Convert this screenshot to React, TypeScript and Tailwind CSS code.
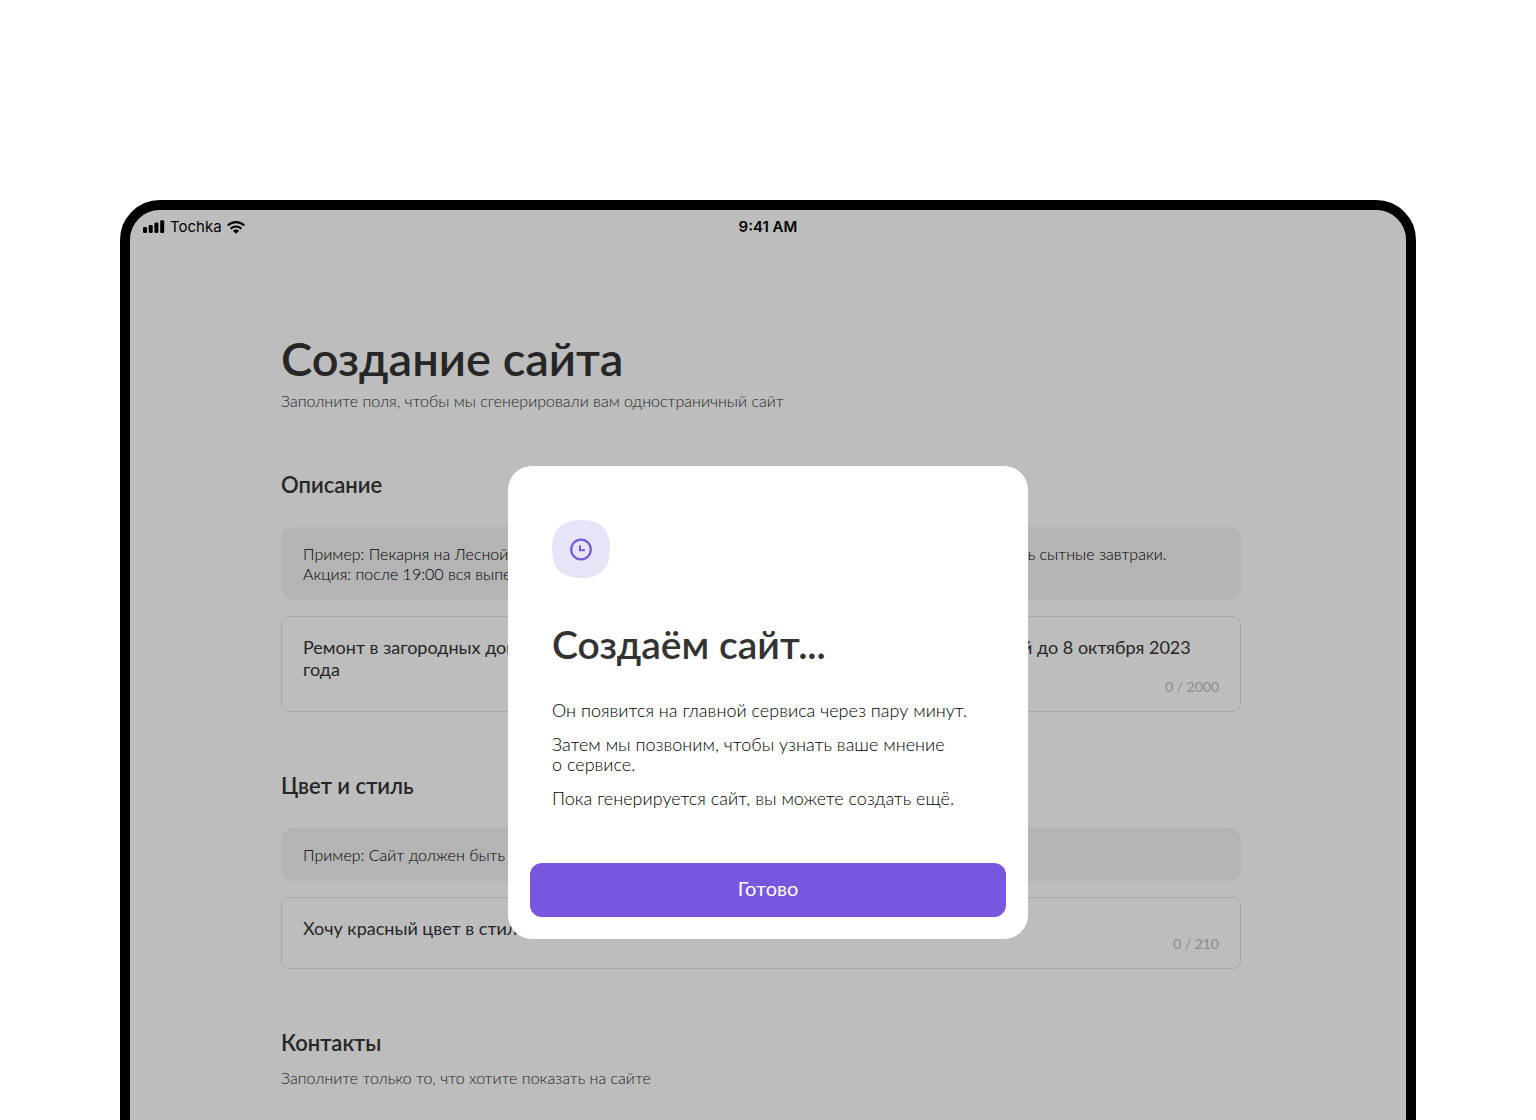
import type { ReactNode } from "react";

function Signal() {
  return (
    <svg width="22" height="14" viewBox="0 0 22 14" fill="currentColor" aria-hidden="true">
      <rect x="0" y="7" width="4" height="6" rx="1.2" />
      <rect x="5.7" y="5" width="4" height="8" rx="1.2" />
      <rect x="11.4" y="2.6" width="4" height="10.4" rx="1.2" />
      <rect x="17.2" y="0.2" width="4" height="12.8" rx="1.2" />
    </svg>
  );
}

function Wifi() {
  return (
    <svg width="18" height="13" viewBox="0 0 18 13" fill="none" stroke="currentColor" strokeWidth="2.1" aria-hidden="true">
      <path d="M0.8 4.6C5.4 0 12.6 0 17.2 4.6" />
      <path d="M3.7 7.7C6.7 4.8 11.3 4.8 14.3 7.7" />
      <path d="M9 12.8L5.9 9.8C7.7 8.2 10.3 8.2 12.1 9.8Z" fill="currentColor" stroke="none" />
    </svg>
  );
}

function ClockBadge() {
  return (
    <svg width="58" height="58" viewBox="0 0 58 58" fill="none" aria-hidden="true">
      <path d="M0 29C0 9.5 9.5 0 29 0C48.5 0 58 9.5 58 29C58 48.5 48.5 58 29 58C9.5 58 0 48.5 0 29Z" fill="#e8e4f8" />
      <circle cx="29" cy="29.5" r="9.8" stroke="#7757dd" strokeWidth="2.2" />
      <path d="M28 25.3V30.3H33" stroke="#7757dd" strokeWidth="2" />
    </svg>
  );
}

function StatusBar() {
  return (
    <div className="relative z-20 grid h-[34px] grid-cols-3 items-center px-[13px] font-['Inter',sans-serif] text-[15px] text-black">
      <div className="flex items-center gap-[5px]">
        <Signal />
        <span>Tochka</span>
        <Wifi />
      </div>
      <div className="text-center font-semibold">9:41 AM</div>
    </div>
  );
}

function Hint({ children }: { children: ReactNode }) {
  return (
    <div className="rounded-xl bg-[#f1f1f1] px-[22px] pt-[17px] pb-4 text-[16px] leading-5 font-light text-black">
      {children}
    </div>
  );
}

type FieldProps = {
  id: string;
  title: string;
  hint: ReactNode;
  value: string;
  limit: number;
  height: string;
};

function Field({ id, title, hint, value, limit, height }: FieldProps) {
  return (
    <section className="mt-[60px]">
      <h2 className="mb-7 text-[22px] leading-7 font-semibold">
        <label htmlFor={id}>{title}</label>
      </h2>
      <Hint>{hint}</Hint>
      <div className="relative mt-4">
        <textarea
          id={id}
          maxLength={limit}
          defaultValue={value}
          className={
            "block w-full resize-none overflow-hidden rounded-lg border border-[#dfdfdf] px-[21px] py-[19px] text-[18px] leading-[22px] outline-none " +
            height
          }
        />
        <span className="absolute right-[22px] bottom-[15px] text-[14px] leading-5 text-[#bbb]">
          0 / {limit}
        </span>
      </div>
    </section>
  );
}

function Modal() {
  return (
    <div className="absolute inset-0 z-10 flex items-start justify-center bg-black/25 pt-[256px]">
      <div
        role="dialog"
        aria-labelledby="modal-title"
        className="w-full max-w-[520px] rounded-3xl bg-white p-[22px] text-[#333]"
      >
        <div className="px-[22px] pt-8">
          <ClockBadge />
          <h2 id="modal-title" className="mt-[42px] text-[39px] leading-[48px] font-semibold">
            Создаём сайт...
          </h2>
          <div className="mt-8 flex flex-col gap-3.5 text-[18px] leading-5 font-light text-black">
            <p>Он появится на главной сервиса через пару минут.</p>
            <p>Затем мы позвоним, чтобы узнать ваше мнение о&nbsp;сервисе.</p>
            <p>Пока генерируется сайт, вы можете создать ещё.</p>
          </div>
        </div>
        <button
          type="button"
          className="mt-[55px] h-[54px] w-full rounded-xl bg-[#7757dd] pb-1 text-[20px] text-white"
        >
          Готово
        </button>
      </div>
    </div>
  );
}

export default function App() {
  return (
    <main className="h-screen overflow-hidden bg-white px-[120px] pt-[200px] font-['Lato',sans-serif] text-[#333]">
      <div className="relative min-h-[1004px] overflow-hidden rounded-[40px] border-10 border-black bg-[#fcfcfc]">
        <StatusBar />
        <div className="pr-3.5">
          <div className="mx-auto max-w-[960px] pt-[86px]">
            <h1 className="text-[47px] leading-[56px] font-semibold">Создание сайта</h1>
            <p className="mt-[5px] text-[16px] leading-5 font-light">
              Заполните поля, чтобы мы сгенерировали вам одностраничный сайт
            </p>
            <Field
              id="description"
              title="Описание"
              hint={
                <>
                  <p>
                    Пример: Пекарня на Лесной. Свежий хлеб, пироги и круассаны каждый день, утром
                    можно заказать сытные завтраки.
                  </p>
                  <p>Акция: после 19:00 вся выпечка со скидкой 30%.</p>
                </>
              }
              value="Ремонт в загородных домах под ключ с бесплатным выездом мастера, летней скидкой до 8 октября 2023 года"
              limit={2000}
              height="h-24"
            />
            <Field
              id="style"
              title="Цвет и стиль"
              hint={<p>Пример: Сайт должен быть в светлых тонах.</p>}
              value="Хочу красный цвет в стиле минимализм"
              limit={210}
              height="h-[72px]"
            />
            <section className="mt-[60px]">
              <h2 className="text-[22px] leading-7 font-semibold">Контакты</h2>
              <p className="mt-[11px] text-[16px] leading-5 font-light">
                Заполните только то, что хотите показать на сайте
              </p>
            </section>
          </div>
        </div>
        <Modal />
      </div>
    </main>
  );
}
